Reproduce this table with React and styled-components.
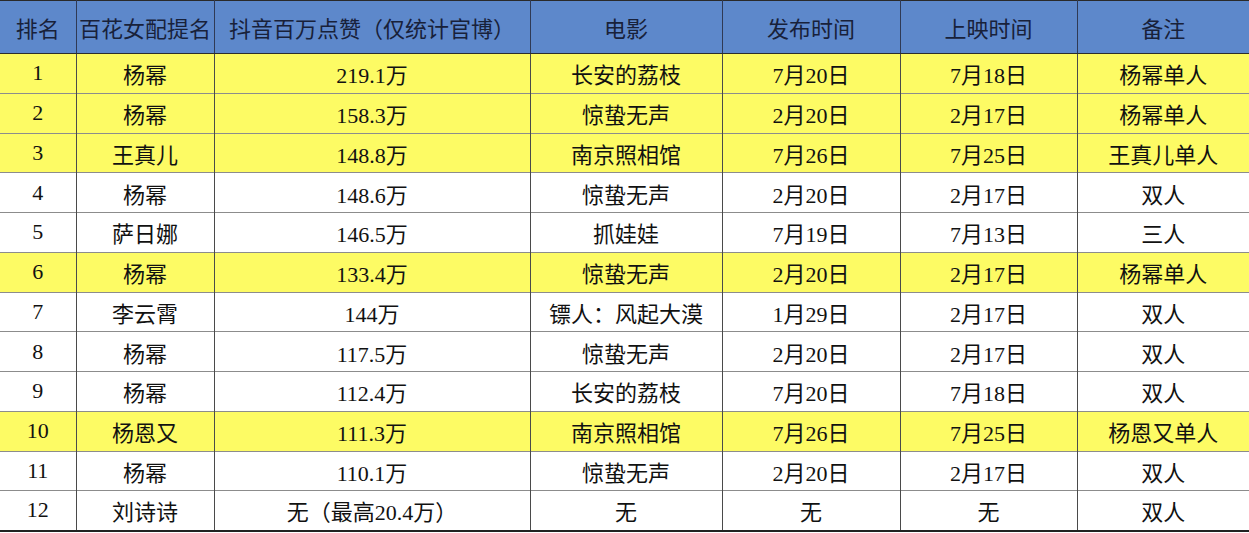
import React from "react";
import styled, { createGlobalStyle } from "styled-components";

const Global = createGlobalStyle`
  html, body { margin: 0; padding: 0; background: #ffffff; }
  body { font-family: "Liberation Serif", "Noto Sans CJK SC", serif; }
`;

const Table = styled.table`
  width: 1249px;
  border-collapse: collapse;
  table-layout: fixed;
  border-top: 1px solid #2a2a2a;
  border-bottom: 2px solid #222;
`;

const HeadRow = styled.tr`
  height: 53px;
  background: #5d88cb;
`;

const HeadCell = styled.th`
  font-family: "Noto Sans CJK SC", sans-serif;
  font-weight: 400;
  font-size: 22px;
  color: #18213a;
  text-align: center;
  padding: 0;
  white-space: nowrap;
  border-bottom: 1px solid #2c2c2c;
  border-left: 1px solid #2f3a55;
  &:first-child { border-left: none; }
`;

const Row = styled.tr`
  height: 39.75px;
  background: ${(p) => (p.$hl ? "#fdfb64" : "#ffffff")};
`;

const Cell = styled.td`
  font-size: 22px;
  color: #111;
  text-align: center;
  padding: 0;
  white-space: nowrap;
  border-top: 1px solid #8c8c8c;
  border-left: 1px solid #4a4a4a;
  &:first-child { border-left: none; }
`;

const cols = [76, 138, 316, 192, 178, 177, 172];
const heads = ["排名", "百花女配提名", "抖音百万点赞（仅统计官博）", "电影", "发布时间", "上映时间", "备注"];

const rows = [
  ["1", "杨幂", "219.1万", "长安的荔枝", "7月20日", "7月18日", "杨幂单人", true],
  ["2", "杨幂", "158.3万", "惊蛰无声", "2月20日", "2月17日", "杨幂单人", true],
  ["3", "王真儿", "148.8万", "南京照相馆", "7月26日", "7月25日", "王真儿单人", true],
  ["4", "杨幂", "148.6万", "惊蛰无声", "2月20日", "2月17日", "双人", false],
  ["5", "萨日娜", "146.5万", "抓娃娃", "7月19日", "7月13日", "三人", false],
  ["6", "杨幂", "133.4万", "惊蛰无声", "2月20日", "2月17日", "杨幂单人", true],
  ["7", "李云霄", "144万", "镖人：风起大漠", "1月29日", "2月17日", "双人", false],
  ["8", "杨幂", "117.5万", "惊蛰无声", "2月20日", "2月17日", "双人", false],
  ["9", "杨幂", "112.4万", "长安的荔枝", "7月20日", "7月18日", "双人", false],
  ["10", "杨恩又", "111.3万", "南京照相馆", "7月26日", "7月25日", "杨恩又单人", true],
  ["11", "杨幂", "110.1万", "惊蛰无声", "2月20日", "2月17日", "双人", false],
  ["12", "刘诗诗", "无（最高20.4万）", "无", "无", "无", "双人", false],
];

export default function App() {
  return (
    <>
      <Global />
      <Table>
        <colgroup>
          {cols.map((w, i) => (
            <col key={i} style={{ width: w }} />
          ))}
        </colgroup>
        <thead>
          <HeadRow>
            {heads.map((h) => (
              <HeadCell key={h}>{h}</HeadCell>
            ))}
          </HeadRow>
        </thead>
        <tbody>
          {rows.map((r) => (
            <Row key={r[0]} $hl={r[7]}>
              {r.slice(0, 7).map((c, i) => (
                <Cell key={i}>{c}</Cell>
              ))}
            </Row>
          ))}
        </tbody>
      </Table>
    </>
  );
}
